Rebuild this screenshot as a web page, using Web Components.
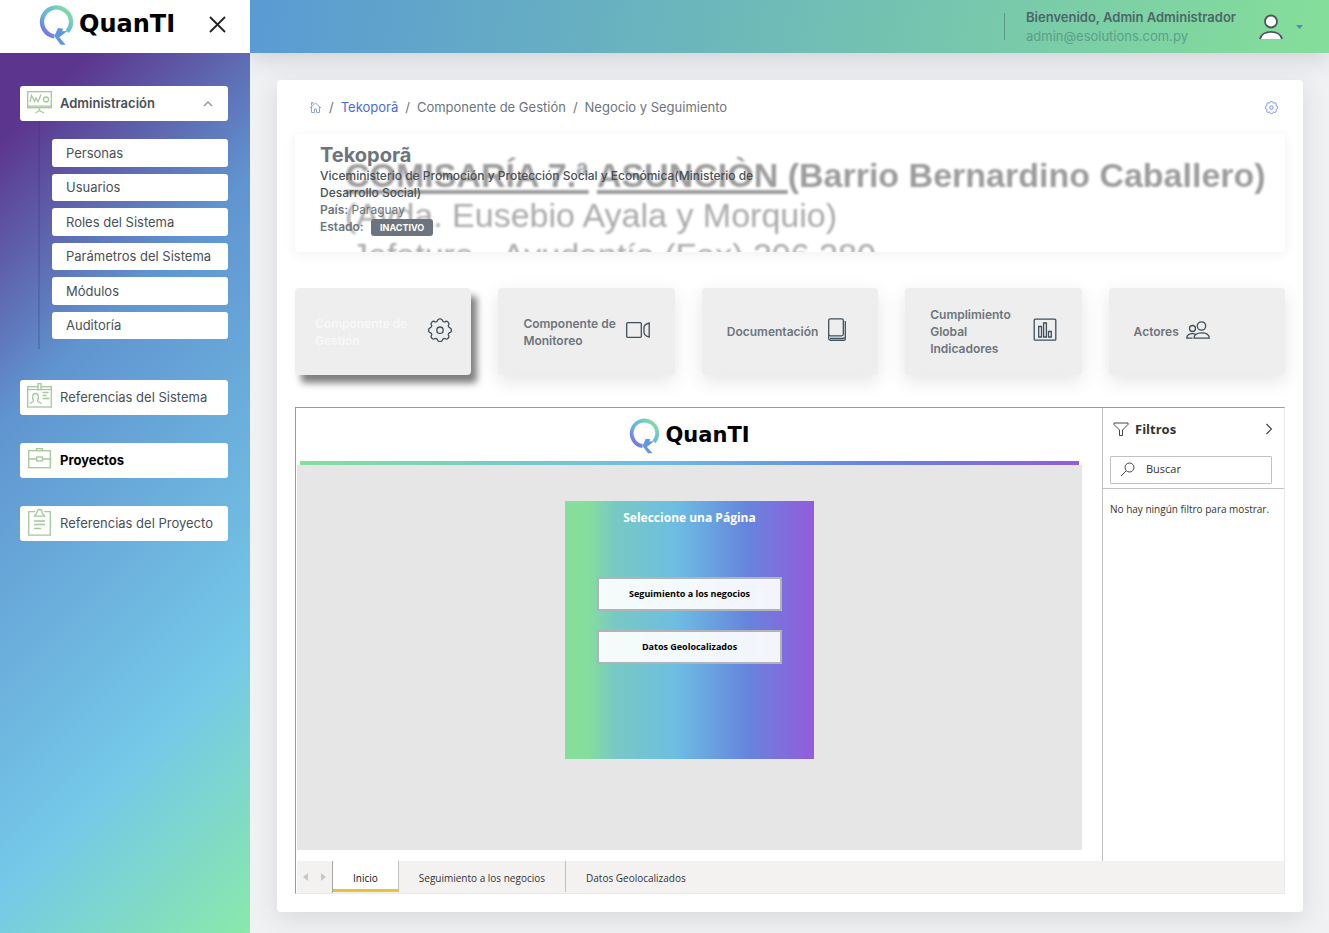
<!DOCTYPE html>
<html lang="es">
<head>
<meta charset="utf-8">
<meta name="viewport" content="width=device-width, initial-scale=1">
<title>QuanTI - Tekoporã</title>
<style>
  body { margin: 0; font: 13px/20px Inter, sans-serif; color: #6c757d; background: #f0f1f3; }
</style>
</head>
<body>
<app-shell>
  <side-bar slot="sidebar">
    <nav-item icon="board" open>Administración
      <nav-subitem slot="children">Personas</nav-subitem>
      <nav-subitem slot="children">Usuarios</nav-subitem>
      <nav-subitem slot="children">Roles del Sistema</nav-subitem>
      <nav-subitem slot="children">Parámetros del Sistema</nav-subitem>
      <nav-subitem slot="children">Módulos</nav-subitem>
      <nav-subitem slot="children">Auditoría</nav-subitem>
    </nav-item>
    <nav-item icon="badge">Referencias del Sistema</nav-item>
    <nav-item icon="case" current>Proyectos</nav-item>
    <nav-item icon="clip">Referencias del Proyecto</nav-item>
  </side-bar>
  <top-bar slot="topbar">
    <span slot="name">Bienvenido, Admin Administrador</span>
    <span slot="mail">admin@esolutions.com.py</span>
  </top-bar>
  <bread-crumb></bread-crumb>
  <project-banner></project-banner>
  <card-row>
    <component-card icon="gear" active>Componente de Gestión</component-card>
    <component-card icon="video">Componente de Monitoreo</component-card>
    <component-card icon="book">Documentación</component-card>
    <component-card icon="chart">Cumplimiento Global Indicadores</component-card>
    <component-card icon="people">Actores</component-card>
  </card-row>
  <report-frame>
    <report-page></report-page>
    <filter-pane slot="filters"></filter-pane>
    <page-tabs slot="tabs"></page-tabs>
  </report-frame>
</app-shell>

<script>
const GEAR = '<path d="M9.600 2.300C10 1 10.500.8 12 .8s2 .2 2.400 1.500c.4 1.400 1.800 2 3 1.300 1.200-.7 1.700-.5 2.700.5s1.200 1.500.5 2.700c-.7 1.200-.1 2.600 1.300 3 1.300.4 1.500.9 1.500 2.400s-.2 2-1.500 2.400c-1.400.4-2 1.800-1.300 3 .7 1.200.5 1.700-.5 2.700s-1.500 1.200-2.700.5c-1.200-.7-2.600-.1-3 1.300-.4 1.300-.9 1.500-2.400 1.500s-2-.2-2.400-1.500c-.4-1.400-1.800-2-3-1.300-1.200.7-1.700.5-2.700-.5s-1.200-1.500-.5-2.700c.7-1.200.1-2.600-1.300-3C.8 14.200.6 13.700.6 12.200s.2-2 1.500-2.400c1.400-.4 2-1.800 1.300-3-.7-1.200-.5-1.700.5-2.700s1.500-1.200 2.700-.5c1.200.7 2.600.1 3-1.300z"/><circle cx="12" cy="12.200" r="3.200"/>';
const ICONS = {
  gear: GEAR,
  video: '<rect x=".7" y="4.700" width="14.600" height="14.600" rx="1"/><path d="M23.200 5v14c-2.600-.7-5.200-2.600-5.200-4.500v-5c0-1.900 2.600-3.800 5.200-4.500z"/>',
  book: '<rect x="3.700" y=".8" width="14.600" height="17" rx="1.500"/><path d="M20.300 3v18c0 .9-.4 1.300-1.300 1.300H5.400c-1 0-1.700-.7-1.700-1.700v-4M5 20.500h13c.8 0 1.200-.4 1.200-1.200"/>',
  chart: '<rect x="1.200" y="1.200" width="21.600" height="21" rx="1"/><path d="M5.700 19V8.500h2.800V19zM10.600 19V5h2.800v14zM15.500 19v-5.500h2.800V19z"/>',
  people: '<circle cx="15.500" cy="8" r="4.200"/><circle cx="6.500" cy="10.500" r="3"/><path d="M8 20.200c0-3.700 3.500-5.400 7.700-5.400s7.600 1.700 7.600 5.400zM6.500 20.200H.8c-.2-3 2.500-4.600 5.700-4.600 1 0 1.900.2 2.700.5"/>',
  board: '<rect x=".7" y="2.700" width="23.600" height="16"/><path d="M.7 17.200h23.600M3 13l1.500-6.500 3 6 1.500-3.500 2 4 3-7.500M12.500 19v2.500l-4 2.500M12.500 21.500l4.500 2.500"/><circle cx="19" cy="10.500" r="2.500"/>',
  badge: '<rect x=".7" y="3.700" width="23.600" height="20.300"/><path d="M.7 6.500h23.600"/><rect x="11" y=".7" width="3" height="6" fill="#fff"/><path d="M3 20.500c.5-1.500 4-1 3.500-3-1.500-2-1.300-7 2-7s3.600 5 2 7c-.4 2 3.500 1.500 4 3M15.500 9.500h6M15.500 12.500h4M15.500 15.500h7"/>',
  case: '<rect x="1.700" y="4.700" width="21.600" height="17"/><path d="M9.500 4.700v-2h6v2M1.700 13h8M15.500 13h8"/><rect x="9.700" y="11" width="5.800" height="4"/>',
  clip: '<path d="M8 2.700H1.700v23.400h21.600V2.700H17"/><path d="M7.500 7.200c0-2 2.500-1.500 2.500-4.200a2.500 2.500 0 0 1 5 0c0 2.700 2.500 2.200 2.500 4.200zM7 12h11M7 15.500h11M7 19.500h7"/>'
};

/* Registers an element whose shadow root is cloned from the template that the render function fills. */
function define(name, render) {
  customElements.define(name, class extends HTMLElement {
    constructor() { super(); this.attachShadow({ mode: 'open' }); }
    connectedCallback() {
      const t = document.createElement('template');
      t.innerHTML = render(this);
      this.shadowRoot.replaceChildren(t.content.cloneNode(true));
    }
  });
}

define('quanti-logo', el => `
<style>
  :host { display: flex; align-items: center; gap: 6px; color: #000; font: 700 24px/1 "DejaVu Sans", sans-serif; }
  :host([small]) { font-size: 21px; }
  svg { height: 40px; width: 34px; flex: none; }
  :host([small]) svg { height: 36px; width: 30px; }
  span { padding-bottom: 2px; }
  :host([small]) span { padding-bottom: 0; }
</style>
<svg viewBox="119 19 102 120" fill="none" aria-hidden="true">
  <defs>
    <linearGradient id="q" x1="130" y1="115" x2="210" y2="35" gradientUnits="userSpaceOnUse">
      <stop offset="0" stop-color="#7b62dc"/><stop offset=".45" stop-color="#68b4e2"/><stop offset=".7" stop-color="#6cc3d0"/><stop offset="1" stop-color="#86e09c"/>
    </linearGradient>
  </defs>
  <path d="M165 113A43.500 43.500 0 1 1 204 99" stroke="url(#q)" stroke-width="13"/>
  <path d="M165 113L176 88L192 90L188 98L204 97L180 116L199 138L184 138Z" fill="#5f98e0"/>
</svg>
<span>QuanTI</span>`);

define('app-shell', el => `
<style>
  :host { display: grid; grid-template-columns: 250px minmax(0, 1fr); min-height: 100vh; }
  .col { display: flex; flex-direction: column; min-width: 0; }
  main { flex: 1; margin: 27px 26px 22px 27px; padding: 16px 18px 18px; background: #fff; border-radius: 4px;
    box-shadow: 0 6px 24px rgba(50, 55, 65, .13); }
</style>
<slot name="sidebar"></slot>
<div class="col"><slot name="topbar"></slot><main><slot></slot></main></div>`);

define('side-bar', el => `
<style>
  :host { display: flex; flex-direction: column; position: relative; z-index: 1; }
  .head { display: flex; align-items: center; justify-content: space-between; height: 53px; padding: 0 23px 4px 39px; box-sizing: border-box; background: #fff; }
  button { display: flex; padding: 0; border: 0; background: none; }
  nav { flex: 1; display: flex; flex-direction: column; gap: 28px; padding: 33px 22px 33px 20px;
    background: linear-gradient(135deg, #5c368e 8%, #6095d0 33%, #75c8e8 74%, #8ae9aa); }
</style>
<div class="head"><quanti-logo></quanti-logo>
  <button aria-label="Cerrar menú"><svg width="19" height="19" viewBox="0 0 19 19" fill="none" stroke="#222" stroke-width="1.800"><path d="M2 2l15 15M17 2L2 17"/></svg></button></div>
<nav><slot></slot></nav>`);

define('nav-item', el => {
  const open = el.hasAttribute('open');
  return `
<style>
  :host { display: block; color: #495057; }
  a { display: flex; align-items: center; gap: 7px; height: 35px; padding: 0 14px 2px 6px; box-sizing: border-box;
    background: #fff; border-radius: 3px; color: inherit; text-decoration: none; }
  :host([open]) a { font-weight: 600; }
  :host([current]) a { font-weight: 700; color: #000; }
  .icon { flex: none; fill: none; stroke: #a5c79a; stroke-width: 1.300; }
  .label { flex: 1; white-space: nowrap; overflow: hidden; }
  .sub { display: grid; grid-auto-rows: 1fr; gap: 7px; height: 200px; margin-left: 18px; padding: 18px 0 10px 12px;
    border-left: 2px solid rgba(40, 50, 110, .22); margin-bottom: 3px; }
</style>
<a href="#"><svg class="icon" width="27" height="29" viewBox="-1 -1 27 29" aria-hidden="true">${ICONS[el.getAttribute('icon')]}</svg>
<span class="label"><slot></slot></span>
${open ? '<svg width="12" height="8" viewBox="0 0 12 8" fill="none" stroke="#999" stroke-width="1.500" aria-hidden="true"><path d="M2 7l4-4 4 4"/></svg>' : ''}</a>
${open ? '<div class="sub"><slot name="children"></slot></div>' : ''}`;
});

define('nav-subitem', el => `
<style>
  :host { display: block; min-height: 0; }
  a { display: flex; align-items: center; height: 100%; padding: 0 14px; background: #fff; border-radius: 3px; color: #495057;
    text-decoration: none; white-space: nowrap; }
</style>
<a href="#"><slot></slot></a>`);

define('top-bar', el => `
<style>
  :host { display: flex; align-items: center; justify-content: flex-end; height: 53px; padding-right: 26px; box-sizing: border-box;
    background: linear-gradient(100deg, #5a9ad4, #84dd9a 98%); box-shadow: 0 4px 26px rgba(40, 45, 70, .18); }
  .who { border-left: 1px solid #57978a; height: 27px; padding-left: 21px; display: flex; flex-direction: column; justify-content: center; line-height: 19px; }
  .name { font-weight: 600; color: #4d6669; }
  .mail { color: #5b9f88; }
  button { display: flex; align-items: center; gap: 12px; margin-left: 22px; padding: 0; border: 0; background: none; }
</style>
<div class="who"><span class="name"><slot name="name"></slot></span><span class="mail"><slot name="mail"></slot></span></div>
<button aria-label="Menú de usuario">
  <svg width="26" height="26" viewBox="0 0 26 26" fill="#fff" stroke="#4d5660" stroke-width="1.800"><circle cx="13" cy="7.500" r="6"/><path d="M2 25c1-4.500 5.500-7.200 11-7.200s10 2.700 11 7.200"/></svg>
  <svg width="7" height="4" viewBox="0 0 7 4" fill="#5583d6"><path d="M0 0h7L3.500 4z"/></svg>
</button>`);

define('bread-crumb', el => `
<style>
  :host { display: flex; align-items: center; justify-content: space-between; height: 22px; padding: 0 7px 0 14px; }
  ol { display: flex; align-items: center; margin: 0; padding: 0; list-style: none; }
  li { display: flex; align-items: center; }
  li + li::before { content: "/"; padding: 0 7px; }
  a { display: flex; color: #4a6bdc; text-decoration: none; }
  button { display: flex; padding: 0; border: 0; background: none; }
</style>
<ol>
  <li><a href="#" aria-label="Inicio"><svg width="13" height="13" viewBox="0 0 13 13" fill="none" stroke="#8ca2ec"><path d="M1 7l5.500-5L12 7M2.500 6v5.500h3V8h2v3.500h3V6M2.500 4.500v-3h1.500v1.500"/></svg></a></li>
  <li><a href="#">Tekoporã</a></li>
  <li>Componente de Gestión</li>
  <li>Negocio y Seguimiento</li>
</ol>
<button aria-label="Configuración"><svg width="13" height="13" viewBox="0 0 24 24" fill="none" stroke="#6d88e4" stroke-width="1.800">${GEAR}</svg></button>`);

define('project-banner', el => `
<style>
  :host { display: block; position: relative; margin-top: 16px; padding: 9px 25px 16px; overflow: hidden; border-radius: 4px; font-size: 12px; line-height: 17px;
    box-shadow: 0 2px 12px rgba(60, 60, 70, .08); }
  .art { position: absolute; inset: 21px 0 0 50px; font: 34px/40px "Liberation Sans", Arial, sans-serif; color: #aaa; white-space: pre; filter: blur(.8px); }
  .art b { color: #9c9c9c; }
  .art u { text-decoration-thickness: 4px; text-underline-offset: 3px; text-decoration-skip-ink: none; }
  .art div:last-child { padding-left: 6px; }
  .info { position: relative; max-width: 440px; }
  h1 { margin: 0; font-size: 20px; line-height: 24px; font-weight: 700; }
  .org { font-weight: 500; color: #495057; }
  b { font-weight: 600; }
  .tag { display: inline-block; margin-left: 4px; padding: 0 9px; background: #6c757d; border-radius: 3px; color: #fff; font-size: 9px; font-weight: 700; }
</style>
<div class="art"><div><b><u>COMISARÍA 7.ª</u> <u>ASUNCIÒN </u>(Barrio Bernardino Caballero)</b></div><div>(Avda. Eusebio Ayala y Morquio)</div><div>Jefatura - Ayudantía (Fax) 206 280</div></div>
<div class="info">
  <h1>Tekoporã</h1>
  <div class="org">Viceministerio de Promoción y Protección Social y Económica(Ministerio de Desarrollo Social)</div>
  <div><b>País:</b> Paraguay</div>
  <div><b>Estado:</b> <span class="tag">INACTIVO</span></div>
</div>`);

define('card-row', el => `
<style>:host { display: grid; grid-template-columns: repeat(5, minmax(0, 1fr)); gap: 27px; margin: 36px 0 32px; }</style>
<slot></slot>`);

define('component-card', el => `
<style>
  :host { display: block; }
  a { display: flex; align-items: center; gap: 7px; height: 87px; padding: 0 25px; box-sizing: border-box; background: #eee; border-radius: 4px;
    box-shadow: 0 6px 18px rgba(50, 55, 70, .13); color: #6c757d; font-size: 12px; line-height: 17px; font-weight: 600; text-decoration: none; }
  :host([active]) a { padding: 0 19px 0 20px; color: #f8f8f8; box-shadow: 6px 8px 7px rgba(0, 0, 0, .5); }
  svg { flex: none; padding-bottom: 3px; fill: none; stroke: #3f4f5c; stroke-width: 1.300; }
</style>
<a href="#"><span><slot></slot></span><svg width="24" height="24" viewBox="0 0 24 24" aria-hidden="true">${ICONS[el.getAttribute('icon')]}</svg></a>`);

define('report-frame', el => `
<style>
  :host { display: grid; grid-template-columns: minmax(0, 1fr) 182px; grid-template-rows: 453px 32px; border: 1px solid #eaeaea;
    border-top-color: #999; border-left-color: #999; padding-left: 1px; font-family: "Open Sans", "Noto Sans", sans-serif; }
  .report { display: flex; flex-direction: column; padding: 0 20px 11px 0; }
  .tabs { grid-column: 1 / -1; display: grid; }
</style>
<div class="report"><slot></slot></div><slot name="filters"></slot><div class="tabs"><slot name="tabs"></slot></div>`);

define('report-page', el => `
<style>
  :host { flex: 1; display: flex; flex-direction: column; background: #e6e6e6; }
  .head { display: flex; justify-content: center; align-items: center; height: 53px; padding-top: 2px; box-sizing: border-box; background: #fff; }
  .rule { height: 4px; border: solid #fff; border-width: 0 3px; background: linear-gradient(90deg, #86de9c, #6dbde3 45%, #6685dd 73%, #945bdb); }
  .panel { display: flex; flex-direction: column; align-items: center; width: 249px; height: 258px; margin: 36px auto 0; box-sizing: border-box; padding-top: 8px;
    background: linear-gradient(90deg, #86de9c 9%, #78c9c4 20%, #6dbde3 45%, #6685dd 73%, #945bdb); }
  h2 { margin: 0 0 50px; font-size: 12px; line-height: 18px; font-weight: 700; color: #fff; }
  button { width: 185px; height: 34px; margin-bottom: 19px; border: 2px solid #b0b3b8; background: rgba(255, 255, 255, .92);
    font: 700 9px/12px "Open Sans", "Noto Sans", sans-serif; color: #000; }
</style>
<div class="head"><quanti-logo small></quanti-logo></div>
<div class="rule"></div>
<div class="panel"><h2>Seleccione una Página</h2><button>Seguimiento a los negocios</button><button>Datos Geolocalizados</button></div>`);

define('filter-pane', el => `
<style>
  :host { display: block; border-left: 1px solid #c2c2c2; color: #333; font-size: 10px; line-height: 16px; }
  .head { display: flex; align-items: center; gap: 6px; height: 42px; padding: 0 11px 0 10px; }
  h2 { flex: 1; margin: 0; font-size: 13px; line-height: 20px; }
  button { display: flex; padding: 0; border: 0; background: none; }
  label { display: flex; align-items: center; gap: 11px; height: 28px; margin: 6px 12px 4px 7px; padding: 0 9px 2px; box-sizing: border-box; border: 1px solid #c2c2c2; border-radius: 1px; }
  input { flex: 1; min-width: 0; padding: 0; border: 0; outline: 0; background: none; font: inherit; font-size: 11px; color: #333; }
  input::placeholder { color: #333; opacity: 1; }
  p { margin: 0; padding: 12px 0 0 7px; border-top: 1px solid #c2c2c2; white-space: nowrap; }
  svg { flex: none; fill: none; stroke: #444; }
</style>
<div class="head"><svg width="16" height="14" viewBox="0 0 16 14" aria-hidden="true"><path d="M1 1h14v1.500L9.500 8v5.500h-3V8L1 2.500z"/></svg><h2>Filtros</h2>
<button aria-label="Contraer filtros"><svg width="8" height="12" viewBox="0 0 8 12"><path d="M1.500 1l5 5-5 5" stroke-width="1.200"/></svg></button></div>
<label><svg width="15" height="15" viewBox="0 0 15 15" aria-hidden="true"><circle cx="9.500" cy="5.500" r="4.500"/><path d="M6 9l-5 5"/></svg><input type="text" placeholder="Buscar" aria-label="Buscar"></label>
<p>No hay ningún filtro para mostrar.</p>`);

define('page-tabs', el => `
<style>
  :host { display: flex; background: #f3f2f1; color: #333; font-size: 10px; line-height: 16px; }
  .step { display: flex; align-items: center; justify-content: space-between; width: 36px; padding: 0 6px; box-sizing: border-box; border-right: 1px solid #a6a6a6; }
  .step button { display: flex; padding: 0; border: 0; }
  button { background: none; }
  .tab { padding: 2px 20px 0; border: 0; border-right: 1px solid #c2c2c2; margin-bottom: 1px; font: inherit; color: inherit; }
  .tab[aria-selected=true] { padding-top: 5px; background: #fff; border-bottom: 3px solid #e3c53c; font-weight: 500; color: #111; }
  .tab:last-child { border-right: 0; }
</style>
<div class="step"><button aria-label="Anterior"><svg width="5" height="8" viewBox="0 0 5 8" fill="#c8c8c8"><path d="M5 0v8L0 4z"/></svg></button>
<button aria-label="Siguiente"><svg width="5" height="8" viewBox="0 0 5 8" fill="#c8c8c8"><path d="M0 0v8l5-4z"/></svg></button></div>
<button class="tab" role="tab" aria-selected="true">Inicio</button>
<button class="tab" role="tab" aria-selected="false">Seguimiento a los negocios</button>
<button class="tab" role="tab" aria-selected="false">Datos Geolocalizados</button>`);
</script>
</body>
</html>
